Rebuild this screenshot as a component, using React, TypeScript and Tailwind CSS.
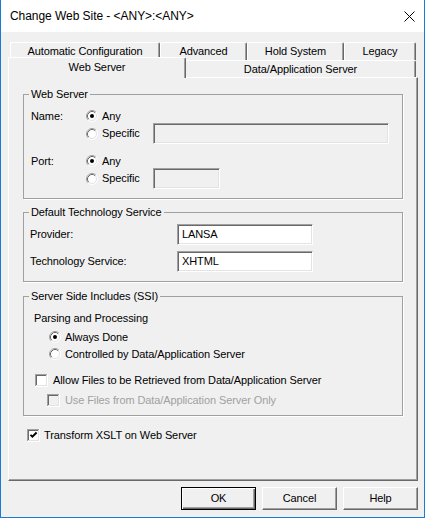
import React from "react";

const Radio = ({ checked }: { checked?: boolean }) => (
  <svg width="12" height="12" viewBox="0 0 12 12" className="shrink-0">
    <circle cx="6" cy="6" r="5" fill="white" />
    <path d="M2.11 9.89A5.5 5.5 0 0 1 9.89 2.11" stroke="#a0a0a0" fill="none" />
    <path d="M9.89 2.11A5.5 5.5 0 0 1 2.11 9.89" stroke="#ffffff" fill="none" />
    <path d="M2.82 9.18A4.5 4.5 0 0 1 9.18 2.82" stroke="#696969" fill="none" />
    <path d="M9.18 2.82A4.5 4.5 0 0 1 2.82 9.18" stroke="#e3e3e3" fill="none" />
    {checked && <circle cx="6" cy="6" r="2" fill="black" />}
  </svg>
);

const CheckBox = ({ checked, disabled }: { checked?: boolean; disabled?: boolean }) => (
  <svg width="13" height="13" viewBox="0 0 13 13" className="shrink-0" shapeRendering="crispEdges">
    <rect x="0" y="0" width="13" height="13" fill="white" />
    <rect x="0" y="0" width="12" height="1" fill="#a0a0a0" />
    <rect x="0" y="0" width="1" height="12" fill="#a0a0a0" />
    <rect x="1" y="1" width="10" height="1" fill="#696969" />
    <rect x="1" y="1" width="1" height="10" fill="#696969" />
    <rect x="1" y="11" width="11" height="1" fill="#e3e3e3" />
    <rect x="11" y="1" width="1" height="11" fill="#e3e3e3" />
    <rect x="2" y="2" width="9" height="9" fill={disabled ? "#f0f0f0" : "white"} />
    {checked && (
      <path d="M3.5 5.8 5.4 7.7 9.6 3.5" stroke="black" strokeWidth="1.9" fill="none" shapeRendering="auto" />
    )}
  </svg>
);

const sunken =
  "h-[21px] border border-t-[#a0a0a0] border-l-[#a0a0a0] border-r-white border-b-white shadow-[inset_1px_1px_0_#696969,inset_-1px_-1px_0_#e3e3e3]";

const backTab =
  "h-[18px] flex items-center justify-center border-t border-l border-r border-t-white border-l-white border-r-[#696969] shadow-[inset_-1px_0_0_#a0a0a0] rounded-t-[2px] bg-[#f0f0f0]";

const button =
  "w-[75px] h-[23px] border border-t-white border-l-white border-r-[#696969] border-b-[#696969] shadow-[inset_-1px_-1px_0_#a0a0a0] bg-[#f0f0f0]";

export default function App() {
  return (
    <div className="w-[425px] h-[518px] flex flex-col bg-[#f0f0f0] border-x border-b border-[#1a7ad4] text-black text-[11px] leading-[13px] tracking-[-0.1px] font-['Liberation_Sans',Arial,sans-serif]">
      {/* title bar */}
      <div className="h-[32px] bg-white flex items-center justify-between pl-[9px] pr-[9px] shrink-0">
        <span className="text-[12px] tracking-[-0.05px]">Change Web Site - &lt;ANY&gt;:&lt;ANY&gt;</span>
        <svg width="11" height="11" viewBox="0 0 11 11">
          <path d="M0.5 0.5 10.5 10.5M10.5 0.5 0.5 10.5" stroke="black" strokeWidth="1" />
        </svg>
      </div>

      {/* tabs */}
      <div className="ml-[7px] mt-[10px] w-[410px]">
        <div className="flex ml-[2px]">
          <div className={`${backTab} w-[150px]`}>Automatic Configuration</div>
          <div className={`${backTab} w-[87px]`}>Advanced</div>
          <div className={`${backTab} w-[97px]`}>Hold System</div>
          <div className={`${backTab} w-[72px]`}>Legacy</div>
        </div>
        <div className="flex items-end h-[20px] mt-[-3px] relative z-10">
          <div className="w-[178px] h-[21px] mb-[-1px] flex items-center justify-center pb-[1px] border-t border-l border-r border-t-white border-l-white border-r-[#696969] shadow-[inset_-1px_0_0_#a0a0a0] rounded-t-[2px] bg-[#f0f0f0]">
            Web Server
          </div>
          <div className="w-[230px] h-[17px] flex items-center justify-center border-t border-r border-t-white border-r-[#696969] shadow-[inset_-1px_0_0_#a0a0a0] rounded-t-[2px] bg-[#f0f0f0]">
            Data/Application Server
          </div>
        </div>

        {/* panel */}
        <div className="h-[404px] flex flex-col px-[14px] pt-[10px] border border-t-white border-l-white border-r-[#696969] border-b-[#696969] shadow-[inset_-1px_-1px_0_#a0a0a0]">
          <fieldset className="border border-[#a0a0a0] shadow-[1px_1px_0_white] min-w-0">
            <legend className="ml-[5px] px-[2px]">Web Server</legend>
            <div className="pl-[7px] pt-[8px] pb-[9px]">
              <div className="h-[14px] flex items-center">
                <span className="w-[55px]">Name:</span>
                <Radio checked />
                <span className="ml-[4px]">Any</span>
              </div>
              <div className="h-[21px] flex items-center">
                <span className="w-[55px]" />
                <div className="w-[67px] flex items-center">
                  <Radio />
                  <span className="ml-[4px]">Specific</span>
                </div>
                <div className={`${sunken} w-[236px] bg-[#f0f0f0]`} />
              </div>
              <div className="h-[14px] mt-[10px] flex items-center">
                <span className="w-[55px]">Port:</span>
                <Radio checked />
                <span className="ml-[4px]">Any</span>
              </div>
              <div className="h-[21px] flex items-center">
                <span className="w-[55px]" />
                <div className="w-[67px] flex items-center">
                  <Radio />
                  <span className="ml-[4px]">Specific</span>
                </div>
                <div className={`${sunken} w-[67px] bg-[#f0f0f0]`} />
              </div>
            </div>
          </fieldset>

          <fieldset className="mt-[7px] border border-[#a0a0a0] shadow-[1px_1px_0_white] min-w-0">
            <legend className="ml-[5px] px-[2px]">Default Technology Service</legend>
            <div className="pl-[6px] pt-[5px] pb-[9px]">
              <div className="h-[21px] flex items-center">
                <span className="w-[147px]">Provider:</span>
                <div className={`${sunken} w-[136px] bg-white flex items-center pl-[4px]`}>LANSA</div>
              </div>
              <div className="h-[21px] mt-[6px] flex items-center">
                <span className="w-[147px]">Technology Service:</span>
                <div className={`${sunken} w-[136px] bg-white flex items-center pl-[4px]`}>XHTML</div>
              </div>
            </div>
          </fieldset>

          <fieldset className="mt-[8px] border border-[#a0a0a0] shadow-[1px_1px_0_white] min-w-0">
            <legend className="ml-[5px] px-[2px]">Server Side Includes (SSI)</legend>
            <div className="pl-[10px] pt-[8px] pb-[8px]">
              <div className="h-[14px] flex items-center">Parsing and Processing</div>
              <div className="h-[14px] mt-[5px] ml-[15px] flex items-center">
                <Radio checked />
                <span className="ml-[4px]">Always Done</span>
              </div>
              <div className="h-[14px] mt-[3px] ml-[15px] flex items-center">
                <Radio />
                <span className="ml-[4px]">Controlled by Data/Application Server</span>
              </div>
              <div className="h-[14px] mt-[12px] ml-[1px] flex items-center">
                <CheckBox />
                <span className="ml-[5px]">Allow Files to be Retrieved from Data/Application Server</span>
              </div>
              <div className="h-[14px] mt-[6px] ml-[13px] flex items-center text-[#a0a0a0]">
                <CheckBox disabled />
                <span className="ml-[5px]">Use Files from Data/Application Server Only</span>
              </div>
            </div>
          </fieldset>

          <div className="h-[14px] mt-[12px] ml-[4px] flex items-center">
            <CheckBox checked />
            <span className="ml-[4px]">Transform XSLT on Web Server</span>
          </div>
        </div>
      </div>

      {/* buttons */}
      <div className="flex justify-end gap-[6px] mt-[6px] mr-[6px]">
        <button className="w-[75px] h-[23px] border border-black shadow-[inset_1px_1px_0_white,inset_-1px_-1px_0_#696969,inset_-2px_-2px_0_#a0a0a0] bg-[#f0f0f0]">
          OK
        </button>
        <button className={button}>Cancel</button>
        <button className={button}>Help</button>
      </div>
    </div>
  );
}
